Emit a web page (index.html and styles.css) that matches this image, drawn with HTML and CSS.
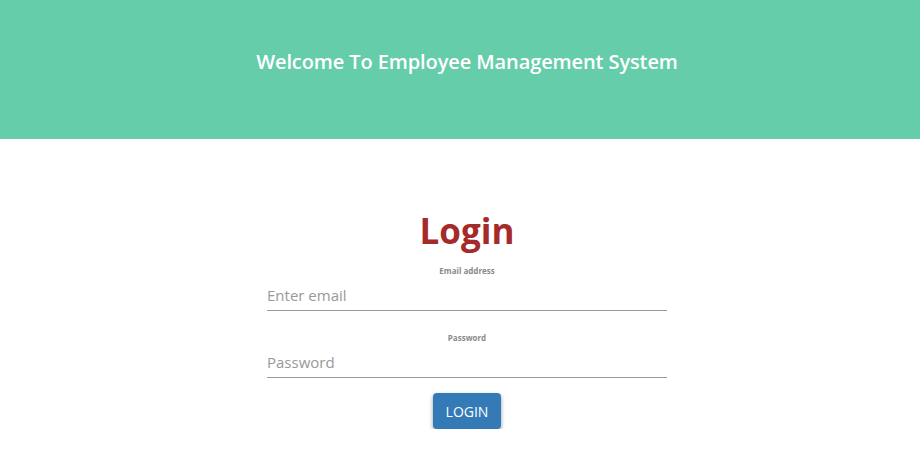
FILE: index.html
```html
<!DOCTYPE html>
<html>
<head>
<meta charset="utf-8">
<link rel="stylesheet" href="styles.css">
</head>
<body>
<header class="banner">
  <h1 class="banner-title">Welcome To Employee Management System</h1>
</header>
<main class="content">
  <form class="login-form">
    <h2 class="login-title">Login</h2>
    <label class="field-label" for="email">Email address</label>
    <input class="field-input" id="email" type="email" placeholder="Enter email">
    <label class="field-label" for="pw">Password</label>
    <input class="field-input" id="pw" type="password" placeholder="Password">
    <button class="login-btn" type="button">LOGIN</button>
  </form>
</main>
</body>
</html>
```
FILE: styles.css
```css
html, body {
  margin: 0;
  padding: 0;
  background: #fff;
  font-family: "Open Sans", "Noto Sans", sans-serif;
}
.banner {
  height: 139px;
  background: #66cdaa;
  display: flex;
  justify-content: center;
  align-items: center;
  padding-left: 14px;
}
.banner-title {
  margin: 0 0 16px 0;
  color: #fff;
  font-size: 20px;
  font-weight: 600;
  letter-spacing: -0.1px;
}
.content {
  display: flex;
  justify-content: center;
  padding-top: 70px;
  padding-left: 14px;
}
.login-form {
  width: 400px;
  display: flex;
  flex-direction: column;
  align-items: center;
}
.login-title {
  margin: 0;
  color: #a52a2a;
  font-size: 35px;
  font-weight: 700;
  line-height: 44px;
}
.field-label {
  font-size: 8px;
  font-weight: 700;
  color: #8a8a8a;
  margin-top: 12px;
  line-height: 11px;
}
.field-input {
  width: 100%;
  box-sizing: border-box;
  border: none;
  border-bottom: 1px solid #999;
  outline: none;
  padding: 3px 0 5px 0;
  font-family: inherit;
  font-size: 15px;
  color: #555;
  margin-top: 6px;
  margin-bottom: 9px;
}
.field-input::placeholder {
  color: #999;
}
.login-btn {
  margin-top: 6px;
  width: 68px;
  height: 36px;
  background: #337ab7;
  color: #fff;
  border: none;
  border-radius: 4px;
  font-family: inherit;
  font-size: 14px;
  box-shadow: 0 2px 4px rgba(0,0,0,0.4);
  padding: 0;
}
```
